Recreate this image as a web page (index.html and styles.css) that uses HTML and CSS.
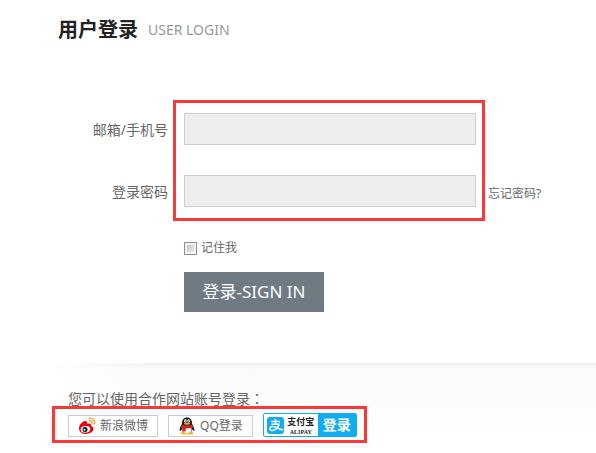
FILE: index.html
```html
<!DOCTYPE html>
<html lang="zh-CN">
<head>
  <meta charset="UTF-8" />
  <title>用户登录</title>
  <link rel="stylesheet" href="styles.css">
</head>
<body>
  <main class="login">
    <h1 class="title">用户登录 <span>USER LOGIN</span></h1>

    <form class="form">
      <div class="fields">
        <div class="row">
          <label for="account">邮箱/手机号</label>
          <input id="account" class="text" type="text" />
        </div>
        <div class="row">
          <label for="password">登录密码</label>
          <input id="password" class="text" type="password" />
          <a class="forgot" href="#">忘记密码?</a>
        </div>
        <div class="mark mark-fields"></div>
      </div>

      <div class="remember">
        <input id="remember" type="checkbox" />
        <label for="remember">记住我</label>
      </div>
      <button class="submit" type="submit">登录-SIGN IN</button>
    </form>
  </main>

  <section class="partner">
    <p>您可以使用合作网站账号登录<span class="colon" lang="zh-TW">：</span></p>
    <div class="links">
      <a class="link" href="#">
        <svg width="18" height="18" viewBox="0 0 18 18">
          <path d="M7 4C4 4.500 1 8 1 11.500C1 15 4 17 8 17C12 17 15.500 14.500 15.500 11.800C15.500 10 14 9.500 13 9C13.500 7 12 6 9.500 7C9.500 5 8.800 3.800 7 4Z" fill="#e60012"/>
          <ellipse cx="7.500" cy="12.300" rx="4.800" ry="3.300" fill="#fff" transform="rotate(-8 7.500 12.300)"/>
          <circle cx="7" cy="12.500" r="2.500" fill="#111"/>
          <circle cx="6.500" cy="12.800" r="1" fill="#fff"/>
          <path d="M11 1.200C14.500 .4 17.500 3.500 16.500 7M11.300 3.800C13.200 3.300 14.600 5 14 6.800" fill="none" stroke="#f9a01b" stroke-width="1.300" stroke-linecap="round"/>
        </svg>
        新浪微博
      </a>
      <a class="link" href="#">
        <svg width="18" height="18" viewBox="0 0 18 18">
          <ellipse cx="6" cy="16" rx="3.200" ry="1.600" fill="#f5b623"/>
          <ellipse cx="12" cy="16" rx="3.200" ry="1.600" fill="#f5b623"/>
          <path d="M9 .5C5.500 .5 4 3 4 6C4 8 1.500 10 1.500 13C1.500 14.500 2.500 14 3.500 12.500C4 17 14 17 14.500 12.500C15.500 14 16.500 14.500 16.500 13C16.500 10 14 8 14 6C14 3 12.500 .5 9 .5Z" fill="#1d1d1d"/>
          <ellipse cx="9" cy="12.500" rx="4.600" ry="3.800" fill="#fff"/>
          <ellipse cx="7.400" cy="4" rx="1.400" ry="1.700" fill="#fff"/>
          <ellipse cx="10.600" cy="4" rx="1.400" ry="1.700" fill="#fff"/>
          <circle cx="7.800" cy="4.200" r=".6" fill="#111"/>
          <circle cx="10.200" cy="4.200" r=".6" fill="#111"/>
          <ellipse cx="9" cy="6.800" rx="3.200" ry="1" fill="#f5a623"/>
          <path d="M3.800 7.500C7 9.200 11 9.200 14.200 7.500L15 10.300C12 11.800 9.500 11.700 7.800 11.500L7.500 14.500L4.500 14.200L4.700 11L3 10.200Z" fill="#e02020"/>
        </svg>
        QQ登录
      </a>
      <a class="alipay" href="#">
        <svg width="17" height="17" viewBox="0 0 17 17">
          <rect width="17" height="17" rx="3" fill="#10aeef"/>
          <path d="M4 4.500H13M8.500 2V7M4.500 7.200H12C11 11 7.500 14 4.500 13.500C1.800 13 2.500 9.500 5.500 9.500C8.500 9.500 11 11.800 16 13" fill="none" stroke="#fff" stroke-width="1.500"/>
        </svg>
        <span class="brand">支付宝<small>ALIPAY</small></span>
        <span class="go">登录</span>
      </a>
      <div class="mark mark-links"></div>
    </div>
  </section>
</body>
</html>
```
FILE: styles.css
```css
* {
  box-sizing: border-box;
}

body {
  margin: 0;
  background: #fff;
  color: #666;
  font-family: "Noto Sans", "Noto Sans CJK SC", sans-serif;
  font-size: 14px;
  line-height: 20px;
}

a {
  color: inherit;
  text-decoration: none;
}

.login {
  padding: 15px 0 0 58px;
}

.title {
  display: flex;
  align-items: center;
  gap: 10px;
  margin: 0;
  color: #222;
  font-size: 20px;
  line-height: 30px;
}

.title span {
  color: #999;
  font-size: 14px;
  font-weight: normal;
}

.form {
  padding-top: 68px;
}

.fields {
  position: relative;
  display: flex;
  flex-direction: column;
  gap: 30px;
}

.row {
  display: flex;
  align-items: center;
}

.row label {
  width: 110px;
  margin-right: 16px;
  padding-top: 2px;
  text-align: right;
}

.text {
  width: 292px;
  height: 32px;
  padding: 0 8px;
  border: 1px solid #ccc;
  background: #eee;
  font: inherit;
}

.forgot {
  margin-left: 12px;
  padding-top: 6px;
  font-size: 12px;
}

/* red outlines */
.mark {
  position: absolute;
  border: 3px solid #fb3838;
  pointer-events: none;
}

.mark-fields {
  top: -13px;
  bottom: -14px;
  left: 115px;
  width: 312px;
}

.remember {
  display: flex;
  align-items: center;
  gap: 4px;
  margin: 31px 0 14px 126px;
  font-size: 12px;
}

.remember input {
  appearance: none;
  width: 13px;
  height: 13px;
  margin: 0;
  border: 1px solid #8e8f8f;
  background: linear-gradient(135deg, #b4bac4, #f6f6f6);
  box-shadow: inset 0 0 0 2px #f4f4f4;
}

.submit {
  display: block;
  width: 140px;
  height: 40px;
  margin-left: 126px;
  padding: 0;
  border: 0;
  background: #6f7a83;
  color: #fff;
  font: inherit;
  font-size: 17px;
}

.partner {
  margin: 51px 0 0 48px;
  padding: 26px 0 16px 20px;
  background:
    linear-gradient(to right, #fff, rgba(255,255,255,0) 120px),
    linear-gradient(#efefef, #fafafa 6px, #fff 80px);
}

.partner p {
  margin: 0 0 4px;
}

.colon {
  font-family: "Noto Sans CJK TC", sans-serif;
  line-height: 1;
}

.links {
  position: relative;
  display: flex;
  align-items: flex-end;
  gap: 10px;
  width: max-content;
}

.link {
  display: flex;
  align-items: center;
  gap: 4px;
  height: 22px;
  padding: 0 9px;
  border: 1px solid #ccc;
  background: #fff;
  font-size: 12px;
}

.alipay {
  display: flex;
  align-items: center;
  height: 24px;
  padding-left: 3px;
  border: 1px solid #10aeef;
  border-radius: 2px;
  background: #fff;
}

.brand {
  display: flex;
  flex-direction: column;
  align-items: center;
  width: 34px;
  color: #222;
  font-size: 9px;
  font-weight: bold;
  line-height: 13px;
}

.brand small {
  font-family: "Liberation Serif", serif;
  font-size: 6px;
  line-height: 8px;
}

.go {
  width: 38px;
  background: #10aeef;
  color: #fff;
  font-weight: bold;
  line-height: 22px;
  text-align: center;
}

.mark-links {
  top: -7px;
  bottom: -6px;
  left: -16px;
  right: -10px;
}
```
